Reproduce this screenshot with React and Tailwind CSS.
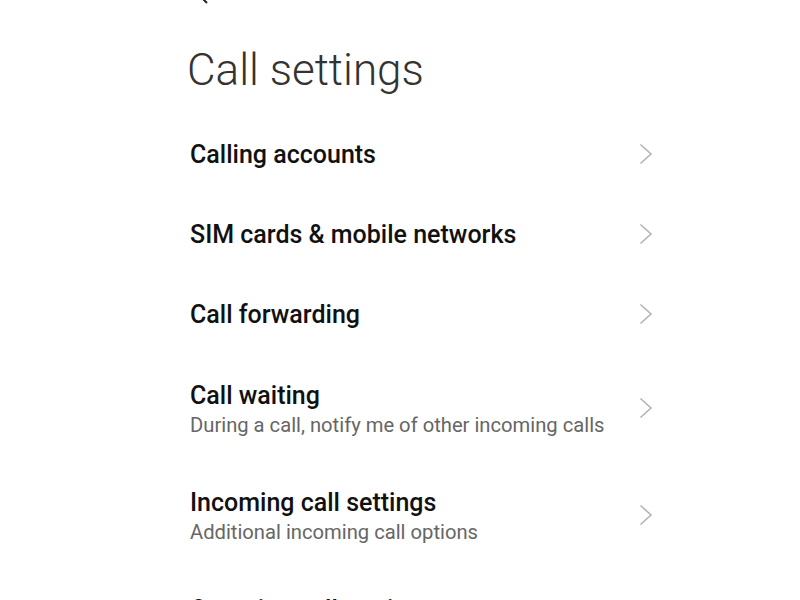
const items = [
    { title: 'Calling accounts' },
    { title: 'SIM cards & mobile networks' },
    { title: 'Call forwarding' },
    { title: 'Call waiting', subtitle: 'During a call, notify me of other incoming calls' },
    { title: 'Incoming call settings', subtitle: 'Additional incoming call options' },
    { title: 'Outgoing call settings', subtitle: 'Additional outgoing call options' },
];

const Chevron = () => (
    <svg width="14" height="22" viewBox="0 0 14 22" fill="none" className="shrink-0">
        <path d="M1.5 1.5 L12 11 L1.5 20.5" stroke="#b3b3b3" strokeWidth="1.6" />
    </svg>
);

const App = () => {
    return (
        <div className="h-[600px] w-[800px] overflow-hidden bg-white font-['Roboto',sans-serif]">
            <div className="pl-[190px] pr-[147px]">
                <div className="-mt-[20px] h-[24px] flex items-end pl-[3px]">
                    <svg width="16" height="26" viewBox="0 0 16 26" fill="none">
                        <path d="M14 1 L2 13 L14 25" stroke="#222" strokeWidth="2" />
                    </svg>
                </div>
                <h1 className="mt-[39px] text-[44px] leading-[54px] font-light text-[#333333] -ml-[3px]">
                    Call settings
                </h1>
                <div className="mt-[17px]">
                    {items.map((it) => (
                        <div
                            key={it.title}
                            className={`flex items-center justify-between ${it.subtitle ? 'h-[107px]' : 'h-[80px]'}`}
                        >
                            <div className={`flex flex-col ${it.subtitle ? 'pt-[3px]' : 'pt-[2px]'}`}>
                                <div className="text-[25px] leading-[30px] font-medium text-[#111111]">{it.title}</div>
                                {it.subtitle && (
                                    <div className="mt-[2px] text-[20.2px] leading-[24px] text-[#666666]">{it.subtitle}</div>
                                )}
                            </div>
                            <Chevron />
                        </div>
                    ))}
                </div>
            </div>
        </div>
    );
};

export default App;
